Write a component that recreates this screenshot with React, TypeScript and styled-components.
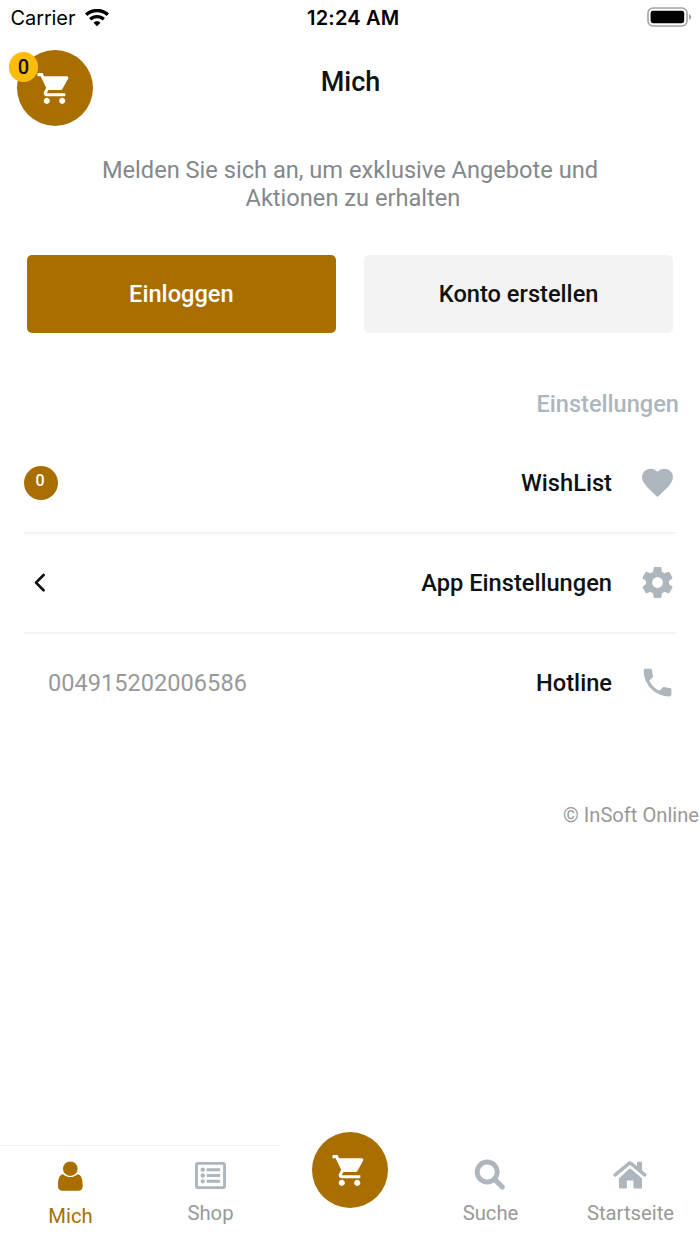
import React from 'react';
import styled, { createGlobalStyle } from 'styled-components';
import { MdShoppingCart, MdFavorite } from 'react-icons/md';
import { FaRegListAlt } from 'react-icons/fa';

const brand = '#a96e00';
const ink = '#101112';
const muted = '#adb5bd';
const label = '#999999';

const GlobalStyle = createGlobalStyle`
  * { box-sizing: border-box; }
  body { margin: 0; background: #fff; font-family: Roboto, sans-serif; color: ${ink}; }
`;

const Screen = styled.div`
  width: 700px;
  height: 1244px;
  display: flex;
  flex-direction: column;
  overflow: hidden;
  background: #fff;
`;

const StatusBar = styled.header`
  height: 36px;
  display: grid;
  grid-template-columns: 1fr auto 1fr;
  align-items: center;
  padding: 0 8px 1px 10.5px;
  font-family: Inter, sans-serif;
  font-size: 20px;
  line-height: 34px;
  color: #000;
`;

const Carrier = styled.div`
  display: flex;
  align-items: center;
  gap: 9.5px;
  letter-spacing: -0.1px;
`;

const Clock = styled.div`
  font-weight: 600;
  padding-left: 4px;
  letter-spacing: 0.2px;
`;

const BatterySlot = styled.div`
  display: flex;
  justify-content: flex-end;
  padding-bottom: 1px;
`;

const TitleBar = styled.div`
  height: 90px;
  display: grid;
  grid-template-columns: 93px 1fr 93px;
  padding-top: 14px;
`;

const CartButton = styled.button`
  position: relative;
  width: 76px;
  height: 76px;
  padding: 0 1px 0 0;
  border: 0;
  border-radius: 50%;
  background: ${brand};
  color: #fff;
  display: flex;
  align-items: center;
  justify-content: center;
  svg { flex: none; }
`;

const CartSlot = styled.div`
  padding-left: 17px;
`;

const CartCount = styled.span`
  position: absolute;
  left: -8px;
  top: 2px;
  width: 29px;
  height: 30px;
  border-radius: 15px;
  background: #fcbc0a;
  color: ${ink};
  font: 500 20px/31px Roboto, sans-serif;
  text-align: center;
`;

const Title = styled.h1`
  margin: 0;
  padding-left: 1px;
  font-size: 27px;
  font-weight: 500;
  line-height: 64px;
  text-align: center;
`;

const Invite = styled.p`
  margin: 30px 0 0;
  padding: 0 90px;
  font-size: 23.63px;
  line-height: 28px;
  text-align: center;
  color: #84888c;
`;

const Actions = styled.div`
  display: grid;
  grid-template-columns: 1fr 1fr;
  gap: 28.5px;
  margin: 43px 27px 0;
`;

const ActionButton = styled.button<{ $primary?: boolean }>`
  height: 78px;
  padding: 0;
  border: 0;
  border-radius: 5px;
  background: ${p => (p.$primary ? brand : '#f3f3f3')};
  color: ${p => (p.$primary ? '#fff' : ink)};
  font: 500 23.65px/78px Roboto, sans-serif;
`;

const SectionTitle = styled.h2`
  margin: 57px 21px 0 0;
  font-size: 23.6px;
  font-weight: 500;
  line-height: 28px;
  text-align: right;
  color: ${muted};
`;

const Settings = styled.div`
  margin: 16px 24px 0;
`;

const Row = styled.div<{ $last?: boolean }>`
  height: 100px;
  display: flex;
  align-items: center;
  border-bottom: 2px solid ${p => (p.$last ? 'transparent' : '#f3f3f3')};
`;

const RowLabel = styled.span`
  margin-left: auto;
  font-size: 23.65px;
  font-weight: 500;
`;

const RowIcon = styled.span`
  width: 37px;
  height: 37px;
  margin: 0 0 1px 27px;
  color: ${muted};
  svg { display: block; }
`;

const WishCount = styled.span`
  width: 34px;
  height: 34px;
  border-radius: 50%;
  background: ${brand};
  color: #fff;
  font-size: 16px;
  font-weight: 500;
  line-height: 29px;
  padding-right: 2px;
  text-align: center;
`;

const Chevron = styled.svg`
  margin-left: 9px;
`;

const Phone = styled.span`
  margin-left: 24px;
  font-size: 23.6px;
  color: ${label};
`;

const Copyright = styled.footer`
  margin-top: 69px;
  padding-right: 1px;
  font-size: 20.15px;
  line-height: 24px;
  text-align: right;
  color: ${label};
`;

const TabBar = styled.nav`
  height: 112px;
  margin-top: auto;
  display: grid;
  grid-template-columns: repeat(5, 140px);
  align-items: end;
`;

const Tab = styled.div<{ $active?: boolean; $line?: boolean }>`
  height: 99px;
  border-top: 1px solid ${p => (p.$line ? '#f3f3f3' : 'transparent')};
  display: flex;
  flex-direction: column;
  align-items: center;
  padding-top: ${p => (p.$active ? 15 : 14)}px;
  gap: ${p => (p.$active ? 12 : 10)}px;
  color: ${p => (p.$active ? brand : muted)};
`;

const TabIcon = styled.span`
  height: 30px;
  display: flex;
  align-items: center;
  svg { flex: none; }
`;

const TabLabel = styled.span<{ $active?: boolean }>`
  font-size: 20.25px;
  line-height: 26px;
  color: ${p => (p.$active ? brand : label)};
  padding-left: 1px;
`;

const CenterTab = styled.div`
  height: 112px;
  display: flex;
  justify-content: center;
`;

const CartGlyph = () => <MdShoppingCart size={37} />;

const WifiIcon = () => (
  <svg width="24" height="18" viewBox="0 0 24 18" fill="none" stroke="#000">
    <path d="M1.2 5.8C7.2.2 16.8.2 22.800 5.800" strokeWidth="3.500" />
    <path d="M5.200 10.300c3.900-3.700 9.700-3.700 13.600 0" strokeWidth="3.300" />
    <path d="M12 17.200l-3.400-3.500c1.900-1.800 4.900-1.800 6.800 0z" fill="#000" stroke="none" />
  </svg>
);

const BatteryIcon = () => (
  <svg width="45" height="20" viewBox="0 0 45 20">
    <rect x="1" y="1" width="39" height="18" rx="5" fill="none" stroke="#a2a2a2" strokeWidth="1.6" />
    <rect x="3.6" y="3.8" width="33.6" height="12.4" rx="2.4" fill="#000" />
    <path d="M42.2 7c2.2.8 2.2 5.2 0 6z" fill="#8c8c8c" />
  </svg>
);

const GearIcon = () => (
  <svg width="37" height="37" viewBox="0 0 24 24" fill="currentColor">
    <path d="M12 15.5A3.5 3.5 0 0 1 8.5 12 3.5 3.5 0 0 1 12 8.5a3.5 3.5 0 0 1 3.5 3.5 3.5 3.5 0 0 1-3.5 3.5m7.43-2.53c.04-.32.07-.64.07-.97 0-.33-.03-.66-.07-1l2.11-1.63c.19-.15.24-.42.12-.64l-2-3.46c-.12-.22-.39-.31-.61-.22l-2.49 1c-.52-.39-1.06-.73-1.69-.98l-.37-2.65A.506.506 0 0 0 14 2h-4c-.25 0-.46.18-.5.42l-.37 2.65c-.63.25-1.17.59-1.69.98l-2.49-1c-.22-.09-.49 0-.61.22l-2 3.46c-.13.22-.07.49.12.64L4.57 11c-.04.34-.07.67-.07 1 0 .33.03.65.07.97l-2.11 1.66c-.19.15-.25.42-.12.64l2 3.46c.12.22.39.3.61.22l2.49-1.01c.52.4 1.06.74 1.69.99l.37 2.65c.04.24.25.42.5.42h4c.25 0 .46-.18.5-.42l.37-2.65c.63-.26 1.17-.59 1.69-.99l2.49 1.01c.22.08.49 0 .61-.22l2-3.46c.12-.22.07-.49-.12-.64z" />
  </svg>
);

const PhoneIcon = () => (
  <svg width="37" height="37" viewBox="0 0 24 24" fill="currentColor">
    <path d="M6.62 10.79c1.44 2.83 3.76 5.14 6.59 6.59l2.2-2.2c.27-.27.67-.36 1.02-.24 1.12.37 2.33.57 3.57.57.55 0 1 .45 1 1V20c0 .55-.45 1-1 1-9.39 0-17-7.61-17-17 0-.55.45-1 1-1h3.5c.55 0 1 .45 1 1 0 1.25.2 2.45.57 3.57.11.35.03.74-.25 1.02l-2.2 2.2z" />
  </svg>
);

const PersonIcon = () => (
  <svg width="26" height="30" viewBox="0 0 26 30" fill="currentColor">
    <circle cx="13.3" cy="7.7" r="7.3" />
    <path d="M6.2 13.3c1.9 1.900 4.400 2.800 7.100 2.800s5.200-.9 7.100-2.800c4 .2 5.300 5.500 5.300 10.200v1.500c0 3-1.600 4.800-4.300 4.800H5.300C2.600 29.800 1 28 1 25v-1.500C1 18.800 2.200 13.500 6.200 13.300z" />
  </svg>
);

const SearchIcon = () => (
  <svg width="32" height="32" viewBox="0 0 32 32" fill="none" stroke="currentColor">
    <circle cx="13.2" cy="13" r="10" strokeWidth="4.8" />
    <path d="M21.3 21l7 7" strokeWidth="5.2" strokeLinecap="round" />
  </svg>
);

const HomeIcon = () => (
  <svg width="34" height="30" viewBox="0 0 34 30" fill="currentColor">
    <path d="M17 8.2l12 10v9.4a1 1 0 0 1-1 1h-6.6a1 1 0 0 1-1-1V20.500h-6.500v7.100a1 1 0 0 1-1 1H7a1 1 0 0 1-1-1v-9.400z" />
    <path d="M2.200 14.900L16.100 3.400a1.500 1.500 0 0 1 1.800 0L31.800 14.900" fill="none" stroke="currentColor" strokeWidth="3.500" strokeLinejoin="round" strokeLinecap="round" />
    <path d="M24 2.500a.8.8 0 0 1 .8-.8h3.400a.8.8 0 0 1 .8.8v10.500l-5-4z" />
  </svg>
);

export default function App() {
  return (
    <Screen>
      <GlobalStyle />
      <StatusBar>
        <Carrier>Carrier <WifiIcon /></Carrier>
        <Clock>12:24 AM</Clock>
        <BatterySlot><BatteryIcon /></BatterySlot>
      </StatusBar>
      <TitleBar>
        <CartSlot>
          <CartButton>
            <CartGlyph />
            <CartCount>0</CartCount>
          </CartButton>
        </CartSlot>
        <Title>Mich</Title>
      </TitleBar>
      <Invite>
        Melden Sie sich an, um exklusive Angebote und
        <br />
        {'\u00a0Aktionen zu erhalten'}
      </Invite>
      <Actions>
        <ActionButton $primary>Einloggen</ActionButton>
        <ActionButton>Konto erstellen</ActionButton>
      </Actions>
      <SectionTitle>Einstellungen</SectionTitle>
      <Settings>
        <Row>
          <WishCount>0</WishCount>
          <RowLabel>WishList</RowLabel>
          <RowIcon><MdFavorite size={37} /></RowIcon>
        </Row>
        <Row>
          <Chevron width="14" height="20" viewBox="0 0 14 20" fill="none" stroke={ink} strokeWidth="2.7" strokeLinecap="round" strokeLinejoin="round">
            <path d="M10.600 2L3 9.600l7.600 7.600" />
          </Chevron>
          <RowLabel>App Einstellungen</RowLabel>
          <RowIcon><GearIcon /></RowIcon>
        </Row>
        <Row $last>
          <Phone>004915202006586</Phone>
          <RowLabel>Hotline</RowLabel>
          <RowIcon><PhoneIcon /></RowIcon>
        </Row>
      </Settings>
      <Copyright>© InSoft Online</Copyright>
      <TabBar>
        <Tab $active $line>
          <TabIcon><PersonIcon /></TabIcon>
          <TabLabel $active>Mich</TabLabel>
        </Tab>
        <Tab $line>
          <TabIcon><FaRegListAlt size={31} /></TabIcon>
          <TabLabel>Shop</TabLabel>
        </Tab>
        <CenterTab>
          <CartButton><CartGlyph /></CartButton>
        </CenterTab>
        <Tab>
          <TabIcon><SearchIcon /></TabIcon>
          <TabLabel>Suche</TabLabel>
        </Tab>
        <Tab>
          <TabIcon><HomeIcon /></TabIcon>
          <TabLabel>Startseite</TabLabel>
        </Tab>
      </TabBar>
    </Screen>
  );
}
